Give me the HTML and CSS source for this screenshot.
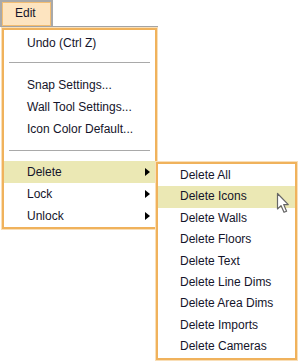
FILE: index.html
```html
<!DOCTYPE html>
<html>
<head>
<meta charset="utf-8">
<link rel="stylesheet" href="styles.css">
</head>
<body>
<div class="menubar">
  <div class="edit-btn">Edit</div>
</div>
<div class="menu main-menu">
  <div class="item">Undo (Ctrl Z)</div>
  <div class="sep sep-a"></div>
  <div class="item">Snap Settings...</div>
  <div class="item">Wall Tool Settings...</div>
  <div class="item">Icon Color Default...</div>
  <div class="sep sep-b"></div>
  <div class="item has-sub active">Delete<span class="arrow"></span></div>
  <div class="item has-sub">Lock<span class="arrow"></span></div>
  <div class="item has-sub">Unlock<span class="arrow"></span></div>
</div>
<div class="menu sub-menu">
  <div class="item">Delete All</div>
  <div class="item active">Delete Icons</div>
  <div class="item">Delete Walls</div>
  <div class="item">Delete Floors</div>
  <div class="item">Delete Text</div>
  <div class="item">Delete Line Dims</div>
  <div class="item">Delete Area Dims</div>
  <div class="item">Delete Imports</div>
  <div class="item">Delete Cameras</div>
</div>
<svg class="cursor" width="14" height="22" viewBox="0 0 14 22">
  <path d="M1.5 1.5 L1.5 17 L5 13.6 L8 20.3 L10.6 19.2 L7.7 12.6 L12.3 12.6 Z" fill="#fff" stroke="#666" stroke-width="1.2" stroke-linejoin="round"/>
</svg>
</body>
</html>
```
FILE: styles.css
```css
html, body {
  margin: 0;
  padding: 0;
  background: #fff;
}
body {
  position: relative;
  width: 300px;
  height: 363px;
  overflow: hidden;
  font-family: "Liberation Sans", Arial, sans-serif;
  font-size: 12px;
  color: #14142a;
}
.menubar {
  display: flex;
  width: 158px;
  height: 26px;
  border-bottom: 1px solid #a4a4a4;
}
.edit-btn {
  box-sizing: border-box;
  width: 53px;
  height: 26px;
  border: 2px solid #a9a9a9;
  border-bottom: none;
  background: #fde4c0;
  box-shadow: inset 0 0 0 1px #f3bd72;
  padding-left: 13px;
  line-height: 23px;
}
.menu {
  position: absolute;
  box-sizing: border-box;
  background: #fff;
  border: 2px solid #f0b25c;
  box-shadow: 0 0 0 1px #f9dfb8;
}
.main-menu {
  left: 2px;
  top: 28px;
  width: 155px;
  padding-top: 2px;
}
.main-menu .item {
  height: 22px;
  line-height: 22px;
  padding-left: 23px;
  position: relative;
}
.sep {
  height: 1px;
  background: #a9a9a9;
  margin-left: 5px;
  margin-right: 5px;
}
.sep-a {
  margin-top: 8px;
  margin-bottom: 11px;
}
.sep-b {
  margin-top: 10px;
  margin-bottom: 10px;
}
.item.active {
  background: #ebe8b4;
}
.arrow {
  position: absolute;
  right: 5px;
  top: 7px;
  width: 0;
  height: 0;
  border-top: 4px solid transparent;
  border-bottom: 4px solid transparent;
  border-left: 5px solid #000;
}
.sub-menu {
  left: 156px;
  top: 162px;
  width: 141px;
  padding-top: 1px;
}
.sub-menu .item {
  height: 21.4px;
  line-height: 21.4px;
  padding-left: 22px;
}
.cursor {
  position: absolute;
  left: 276px;
  top: 192px;
}
```
